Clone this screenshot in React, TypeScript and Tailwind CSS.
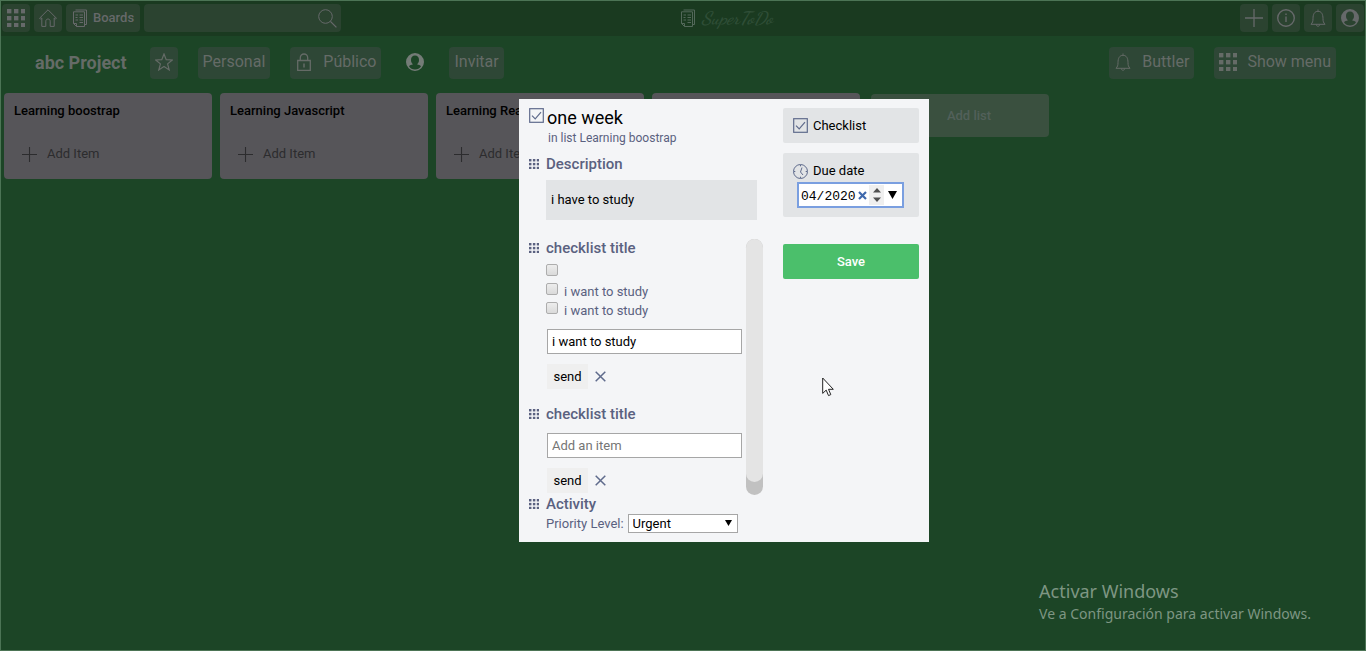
import type { ReactNode } from "react";

const sans = "font-['Roboto','Liberation_Sans',sans-serif]";

function Icon({ className, box = 18, children }: { className: string; box?: number; children: ReactNode }) {
  return (
    <svg
      viewBox={`0 0 ${box} ${box}`}
      className={`shrink-0 ${className}`}
      fill="none"
      stroke="currentColor"
      strokeWidth="1"
      aria-hidden="true"
    >
      {children}
    </svg>
  );
}

function GridIcon({ className }: { className: string }) {
  return (
    <Icon className={className}>
      {[0, 7, 14].map((y) =>
        [0, 7, 14].map((x) => (
          <rect key={`${x}-${y}`} x={x} y={y} width="4.4" height="4.4" fill="currentColor" stroke="none" />
        ))
      )}
    </Icon>
  );
}

function HomeIcon() {
  return (
    <Icon className="size-[18px]">
      <path d="M.6 9.2 9 .8l8.400 8.400-.9.9-1.300-1.200v8.500h-4v-5.200c0-1.300-1-2.200-2.200-2.200s-2.200.9-2.200 2.200v5.200h-4V8.900l-1.300 1.200z" />
    </Icon>
  );
}

function BoardIcon({ className }: { className: string }) {
  return (
    <Icon className={className}>
      <path d="M4.500 1h11v14.500h-2M2.500 2.800h11V17.500h-8l-3-3zM2.500 14.500h3v3" />
      <path d="M4.500 6h2.500M8.500 6H12M4.500 8.500h2M8.500 8.500H12M4.500 11h2.500M8.500 11H12" />
      <path d="M8.500 13.500H12" />
    </Icon>
  );
}

function SearchIcon() {
  return (
    <Icon className="size-[19px]" box={19}>
      <circle cx="7.500" cy="7.500" r="6.800" />
      <path d="m12.400 12.400 6 6" strokeWidth="1.300" />
    </Icon>
  );
}

function PlusIcon({ className }: { className: string }) {
  return (
    <Icon className={className}>
      <path d="M0 9h18M9 0v18" strokeWidth="1.300" />
    </Icon>
  );
}

function InfoIcon() {
  return (
    <Icon className="size-[18px]">
      <circle cx="9" cy="9" r="8.300" strokeWidth="1.400" />
      <path d="M9 7.500v5.500M9 4.600v1.500" strokeWidth="1.400" />
    </Icon>
  );
}

function BellIcon() {
  return (
    <Icon className="size-[18px]">
      <path d="M9 .5v1.300M2 15.300c1.600-1.700 2-3 2-5.600C4 5.200 5.500 2.300 9 2.300s5 2.900 5 7.400c0 2.600.4 3.900 2 5.600zM7.300 15.500c0 2.300 3.400 2.300 3.400 0" />
    </Icon>
  );
}

function UserIcon() {
  return (
    <Icon className="size-[18px]">
      <path
        d="M9 0a9 9 0 1 0 0 18A9 9 0 0 0 9 0zm0 2.600c2.500 0 4 1.800 4 4.300 0 2-.8 3.400-2 4.400 1.600.5 3.200 1 4 2A7.500 7.500 0 0 1 9 16.600a7.500 7.500 0 0 1-6-3.300c.8-1 2.400-1.500 4-2-1.200-1-2-2.400-2-4.400 0-2.500 1.500-4.300 4-4.300z"
        fill="currentColor"
        fillRule="evenodd"
        stroke="none"
      />
    </Icon>
  );
}

function StarIcon() {
  return (
    <Icon className="size-[18px]">
      <path d="m9 1 2.200 5.700 6.100.3-4.700 3.900 1.600 6L9 13.500l-5.200 3.400 1.600-6L.7 7l6.100-.3z" strokeWidth="1.200" />
    </Icon>
  );
}

function LockIcon() {
  return (
    <Icon className="size-[18px]">
      <path d="M2.700 7.500h12.600v9.800H2.700zM5.300 7.500V4.700a3.700 3.700 0 0 1 7.400 0v2.800" strokeWidth="1.300" />
      <path d="M9 10.500v4" strokeWidth="1.500" />
    </Icon>
  );
}

function CheckIcon() {
  return (
    <Icon className="size-[15px] text-[#5f6b8c]" box={15}>
      <rect x=".7" y=".7" width="13.600" height="13.600" strokeWidth="1.200" />
      <path d="m3 7.600 3.200 3.200 5.800-6.600" strokeWidth="1.200" />
    </Icon>
  );
}

function ClockIcon() {
  return (
    <Icon className="size-[15px] text-[#5f6b8c]" box={15}>
      <circle cx="7.500" cy="7.500" r="7" strokeWidth="1" />
      <path d="M9 3.500 7.500 8 10 11M7.500 1v1.300M7.500 12.700V14M1 7.500h1.300M12.700 7.500H14" />
    </Icon>
  );
}

function CloseIcon() {
  return (
    <Icon className="size-[11px] text-[#5f6b8c]" box={11}>
      <path d="m.7.7 9.600 9.600M10.300.7.7 10.300" strokeWidth="1.500" />
    </Icon>
  );
}

function TopButton({ label, children }: { label: string; children: ReactNode }) {
  return (
    <button aria-label={label} className="flex size-7 items-center justify-center rounded bg-[#2b4330]">
      {children}
    </button>
  );
}

const pill = "flex h-8 items-center rounded bg-[#2e4736] pb-[2px] text-base leading-5";

function SectionTitle({ children }: { children: ReactNode }) {
  return (
    <h3 className="flex h-5 items-center gap-[7px] text-[15px] font-medium leading-5 text-[#5a6180]">
      <GridIcon className="size-[10px]" />
      {children}
    </h3>
  );
}

function ItemForm({ value }: { value?: string }) {
  return (
    <form className="ml-[18px]" onSubmit={(e) => e.preventDefault()}>
      <input
        aria-label="Add an item"
        placeholder="Add an item"
        defaultValue={value}
        className="block h-[25px] w-[195px] border border-[#a6a6a6] bg-white px-1 text-[13px] text-black placeholder:text-[#757575]"
      />
      <div className="mt-[10px] flex h-[25px] items-center gap-[7px]">
        <button className="h-[25px] w-[41px] bg-[#efefef] text-[13px] text-black">send</button>
        <button type="button" aria-label="Close">
          <CloseIcon />
        </button>
      </div>
    </form>
  );
}

function CheckItem({ label }: { label: string }) {
  return (
    <label className="flex h-[19px] gap-[6px] text-[13px] leading-5">
      <input
        type="checkbox"
        aria-label={label || "Empty item"}
        className="mt-[2px] size-3 appearance-none rounded-xs border border-[#adadad] bg-linear-to-b from-[#ededed] to-[#dadada]"
      />
      <span className="mt-px">{label}</span>
    </label>
  );
}

function List({ title }: { title: string }) {
  return (
    <section className="h-[86px] w-[208px] rounded bg-[#565559] px-[10px] pt-2">
      <h2 className="text-[13px] font-medium leading-5 text-black">{title}</h2>
      <button className="ml-2 mt-[23px] flex items-center gap-[10px] text-[13px] leading-5 text-[#2c2c2e]">
        <PlusIcon className="size-[15px]" />
        Add Item
      </button>
    </section>
  );
}

function CardDialog() {
  return (
    <div role="dialog" aria-label="one week" className="flex w-[410px] items-start bg-[#f4f5f7] px-[10px] pt-[9px] pb-[9px] text-[#5a6180]">
      <div className="w-[234px] shrink-0">
        <h2 className="flex h-5 gap-[3px] text-[18px] leading-5 text-black">
          <CheckIcon />
          one week
        </h2>
        <p className="ml-[19px] text-[12px] leading-5">in list Learning boostrap</p>
        <div className="mt-[6px]">
          <SectionTitle>Description</SectionTitle>
        </div>
        <textarea
          aria-label="Description"
          defaultValue="i have to study"
          className="ml-[17px] mt-[6px] block h-10 w-[211px] resize-none bg-[#e2e4e6] px-[5px] py-[10px] text-[13px] leading-5 text-black"
        />
        <div className="mt-[19px] flex h-64 justify-between">
          <div className="flex-1">
            <div className="-mt-px">
              <SectionTitle>checklist title</SectionTitle>
            </div>
            <div className="ml-[17px] mt-1">
              <CheckItem label="" />
              <CheckItem label="i want to study" />
              <CheckItem label="i want to study" />
            </div>
            <div className="mt-[10px]">
              <ItemForm value="i want to study" />
            </div>
            <div className="mb-[9px] mt-[15px]">
              <SectionTitle>checklist title</SectionTitle>
            </div>
            <ItemForm />
          </div>
          <div className="h-64 w-[17px] rounded-full bg-[#c1c1c1]">
            <div className="h-[243px] rounded-full bg-[#e4e4e4]" />
          </div>
        </div>
        <div className="-mt-px">
          <SectionTitle>Activity</SectionTitle>
        </div>
        <label className="ml-[17px] flex h-[19px] items-center gap-1 whitespace-nowrap text-[13px]">
          Priority Level:
          <span className="relative">
            <select
              defaultValue="Urgent"
              className="block h-[19px] w-[110px] appearance-none border border-[#a6a6a6] bg-white px-1 text-[13px] leading-4 text-black"
            >
              <option>Urgent</option>
              <option>High</option>
              <option>Low</option>
            </select>
            <svg viewBox="0 0 7 6" className="pointer-events-none absolute right-[6px] top-[6px] h-[6px] w-[7px]" aria-hidden="true">
              <path d="M0 0h7L3.500 6z" />
            </svg>
          </span>
        </label>
      </div>
      <div className="ml-5 w-[136px] text-[13px] text-black">
        <button className="flex h-[35px] w-full items-center gap-[5px] rounded-xs bg-[#e2e4e6] px-[10px]">
          <CheckIcon />
          Checklist
        </button>
        <div className="mt-[10px] h-16 rounded-xs bg-[#e2e4e6] pl-[10px] pt-2">
          <label htmlFor="due" className="flex h-5 items-center gap-[5px]">
            <ClockIcon />
            Due date
          </label>
          <div className="ml-1 mt-px flex h-[26px] w-[107px] items-center border-2 border-[#7a9fe0] bg-white pl-[2px]">
            <input
              id="due"
              defaultValue="04/2020"
              className="w-[57px] pt-[3px] font-['Liberation_Mono',monospace] text-[13px] leading-4 outline-none"
            />
            <button aria-label="Clear" className="text-[#3f69ad]">
              <Icon className="size-[9px]" box={9}>
                <path d="m1 1 7 7M8 1 1 8" strokeWidth="2.200" />
              </Icon>
            </button>
            <button aria-label="Step" className="ml-[2px] flex h-5 w-[15px] items-center justify-center bg-[#efefef] text-[#505050]">
              <svg viewBox="0 0 8 14" className="h-[14px] w-2" fill="currentColor" aria-hidden="true">
                <path d="M0 4.500 4 0l4 4.500zM0 9.500 4 14l4-4.500z" />
              </svg>
            </button>
            <button aria-label="Open calendar" className="ml-1">
              <svg viewBox="0 0 9 8" className="h-2 w-[9px]" aria-hidden="true">
                <path d="M0 0h9L4.500 8z" />
              </svg>
            </button>
          </div>
        </div>
        <button className="mt-[27px] h-[35px] w-full rounded-xs bg-[#4bbf6b] text-[13px] font-medium text-white">Save</button>
      </div>
    </div>
  );
}

export default function App() {
  return (
    <div className={`relative min-h-screen overflow-hidden border border-[#4c7455] bg-[#1c4526] text-[#65706a] ${sans}`}>
      <header className="grid grid-cols-[1fr_auto_1fr] items-center bg-[#1a3a20] px-px pb-1 pt-[3px] text-[#66696a]">
        <div className="flex gap-1">
          <TopButton label="Apps"><GridIcon className="size-[18px]" /></TopButton>
          <TopButton label="Home"><HomeIcon /></TopButton>
          <button className="flex h-7 items-center gap-1 rounded bg-[#2b4330] pl-[5px] pr-[6px] text-[13px] font-medium">
            <BoardIcon className="size-[18px]" />
            Boards
          </button>
          <div className="flex h-7 w-[197px] items-center rounded bg-[#2b4330] pr-1">
            <input aria-label="Search" className="w-full min-w-0 bg-transparent px-2 text-[13px] outline-none" />
            <SearchIcon />
          </div>
        </div>
        <a href="#" className="ml-[86px] flex items-center gap-1 text-[#53685a]">
          <BoardIcon className="size-[18px]" />
          <span className="font-['Dancing_Script',cursive] text-[18px] font-bold italic leading-5 text-[#2f4e37]">SuperToDo</span>
        </a>
        <div className="flex justify-end gap-1">
          <TopButton label="Add"><PlusIcon className="size-[18px]" /></TopButton>
          <TopButton label="Info"><InfoIcon /></TopButton>
          <TopButton label="Notifications"><BellIcon /></TopButton>
          <TopButton label="Account"><UserIcon /></TopButton>
        </div>
      </header>

      <nav className="flex items-center gap-5 pb-[14px] pl-[34px] pr-[29px] pt-[11px] text-[#656b67]">
        <h1 className="mr-[3px] text-[18px] font-bold leading-8">abc Project</h1>
        <button aria-label="Favourite" className={`${pill} px-[5px]`}><StarIcon /></button>
        <button className={`${pill} px-[5px]`}>Personal</button>
        <button className={`${pill} gap-[10px] px-[5px]`}><LockIcon />Público</button>
        <button aria-label="Member" className="px-[5px] pb-[2px] text-[#747c77]"><UserIcon /></button>
        <button className={`${pill} px-[5px]`}>Invitar</button>
        <div className="ml-auto flex gap-5">
          <button className={`${pill} gap-[10px] px-[5px]`}><BellIcon />Buttler</button>
          <button className={`${pill} gap-[10px] px-[5px]`}><GridIcon className="size-[18px]" />Show menu</button>
        </div>
      </nav>

      <main className="flex items-start gap-2 px-[3px]">
        <List title="Learning boostrap" />
        <List title="Learning Javascript" />
        <List title="Learning React" />
        <List title="Learning Node" />
        <button className="ml-[3px] mt-px h-[43px] w-[178px] rounded bg-[#3a503f] pl-[18px] text-[13px] font-medium text-[#52605a]">
          Add list
        </button>
      </main>

      <div className="absolute inset-0 flex items-start justify-center pl-[82px] pt-[98px]">
        <CardDialog />
      </div>

      <div className="pointer-events-none absolute bottom-[25px] right-[54px] font-['Noto_Sans','Open_Sans',sans-serif] text-[#7e9683]">
        <p className="text-[18px] leading-6">Activar Windows</p>
        <p className="text-[14px] leading-[22px]">Ve a Configuración para activar Windows.</p>
      </div>

      <svg viewBox="0 0 12 20" className="pointer-events-none absolute left-[821px] top-[376px] h-5 w-3" aria-hidden="true">
        <path d="M.7 1v15.400l3.500-3.300 2.300 5.500 2.300-1-2.300-5.300h4.800z" fill="#fff" stroke="#222" strokeWidth="1" />
      </svg>
    </div>
  );
}
